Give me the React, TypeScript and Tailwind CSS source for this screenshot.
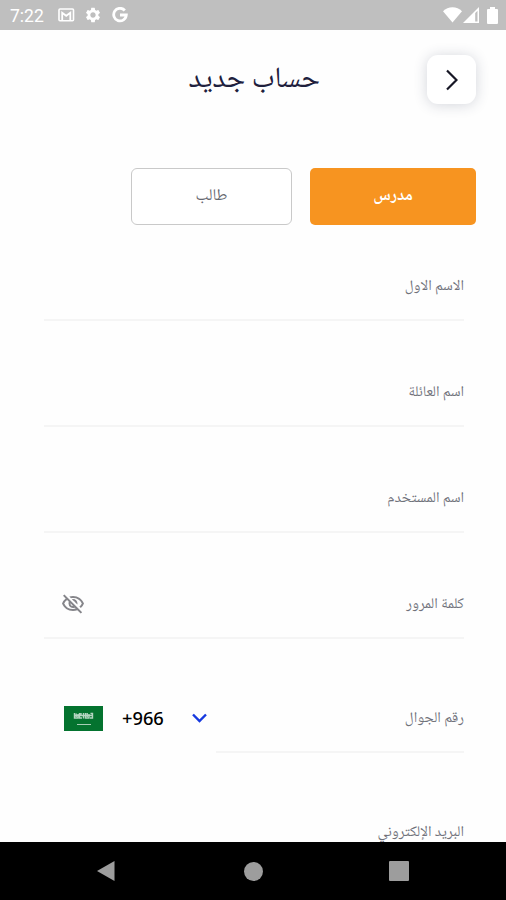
import { MdOutlineVisibilityOff, MdSettings } from "react-icons/md";

type Field = {
  label: string;
  secure?: boolean;
};

const fields: Field[] = [
  { label: "الاسم الاول" },
  { label: "اسم العائلة" },
  { label: "اسم المستخدم" },
  { label: "كلمة المرور", secure: true }
];

function StatusBar() {
  return (
    <div
      dir="ltr"
      className="flex h-[30px] shrink-0 items-center justify-between bg-[#bfbfbf] pr-2 pl-[10px] text-white"
    >
      <div className="flex items-center">
        <span className="w-[48px] pt-[2px] font-[Roboto] text-[17.5px] leading-[30px]">7:22</span>
        <svg className="h-[14px] w-[17px]" viewBox="0 0 17 14" fill="none">
          <rect x="1" y="1" width="14.5" height="11.8" rx="1" stroke="white" strokeWidth="1.6" />
          <path d="M4.2 12V4.8L8.2 7.8L12.3 4.8V12" stroke="white" strokeWidth="1.8" />
        </svg>
        <MdSettings className="ml-[9px] h-[18px] w-[18px]" />
        <svg className="ml-[10px] h-4 w-4" viewBox="0 0 16 16" fill="none">
          <path d="M12.8 3.5A6.3 6.3 0 1 0 14.3 8H8" stroke="white" strokeWidth="2.8" />
        </svg>
      </div>
      <div className="flex items-center">
        <svg className="h-4 w-[19px]" viewBox="0 0 19 16" fill="white">
          <path d="M0 4.2C5-1.2 14-1.2 19 4.2L9.5 15.5Z" />
        </svg>
        <svg className="ml-[1px] h-4 w-4" viewBox="0 0 16 16" fill="white">
          <path fillRule="evenodd" d="M0 16L16 0V16ZM11 7.2V14.6H14.5V3.8Z" />
          <path d="M11 6H12.2V15H11Z" />
        </svg>
        <svg className="ml-[8px] h-[17px] w-[11px]" viewBox="0 0 11 17" fill="white">
          <path d="M3 0H8V2H10Q11 2 11 3V16Q11 17 10 17H1Q0 17 0 16V3Q0 2 1 2H3Z" />
        </svg>
      </div>
    </div>
  );
}

function Flag() {
  return (
    <svg className="h-[25px] w-[39px]" viewBox="0 0 39 25">
      <rect width="39" height="25" fill="#04732f" />
      <path
        d="M10.5 7V12H14V8M12.2 7.5V11M15.5 7V12H18M17 7V10M19.5 7V12.5M21.5 7V12H25V8M23.2 7V11M26.5 7.5H28.5V12H26M10 9.5H29"
        fill="none"
        stroke="white"
        strokeOpacity="0.7"
        strokeWidth="1.4"
      />
      <path d="M13 18.5H27" stroke="white" strokeOpacity="0.65" strokeWidth="1" />
    </svg>
  );
}

function NavigationBar() {
  return (
    <div dir="ltr" className="flex h-[58px] shrink-0 items-center bg-black pl-[96px]">
      <svg className="h-[22px] w-[19px]" viewBox="0 0 19 22">
        <path d="M1 11L18.5 1V21Z" fill="#9d9d9d" />
      </svg>
      <div className="ml-[129px] h-[19px] w-[19px] rounded-full bg-[#9d9d9d]" />
      <div className="ml-[126px] h-5 w-5 rounded-[1px] bg-[#9d9d9d]" />
    </div>
  );
}

export default function App() {
  return (
    <div
      dir="rtl"
      className="flex h-[900px] w-[506px] flex-col overflow-hidden bg-[#fefefe] font-['Noto_Naskh_Arabic_UI','Noto_Naskh_Arabic','Noto_Sans_Arabic','Noto_Sans','DejaVu_Sans',sans-serif]"
    >
      <StatusBar />
      <main className="flex min-h-0 flex-1 flex-col">
        <header className="flex h-[138px] shrink-0 items-start px-[30px] pt-[25px]">
          <button className="flex h-[49px] w-[49px] items-center justify-center rounded-[11px] bg-white text-[#171725] shadow-[0_1px_14px_rgba(40,50,80,0.2)]">
            <svg className="h-[22px] w-3" viewBox="0 0 12 22" fill="none">
              <path d="M1 1.5L10.5 11L1 20.5" stroke="currentColor" strokeWidth="2.2" />
            </svg>
          </button>
          <h1 className="mr-[107px] text-[29.4px] leading-[50px] whitespace-nowrap text-[#20203d]">
            حساب جديد
          </h1>
        </header>
        <div className="flex h-[57px] shrink-0 gap-[18px] pr-[30px] text-[16.5px]">
          <button className="w-[166px] rounded-[5px] bg-[#f79420] pb-[1px] font-bold text-white">مدرس</button>
          <button className="w-[161px] rounded-[6px] border border-[#c9c9c9] bg-white pb-[1px] text-[#666870]">
            طالب
          </button>
        </div>
        <form className="mr-[42px] ml-[44px] text-[14.9px] text-[#70727b]">
          {fields.map((field) => (
            <div
              key={field.label}
              className="flex h-[106px] items-end justify-between border-b-2 border-[#f5f5f5] pb-[20px] first:h-[96px]"
            >
              <label className="leading-[26px] whitespace-nowrap">{field.label}</label>
              {field.secure && <MdOutlineVisibilityOff className="mb-[1px] ml-[17px] h-6 w-6 text-[#85858a]" />}
            </div>
          ))}
          <div className="flex h-[114px] justify-between">
            <div className="flex w-[248px] items-end border-b-2 border-[#f5f5f5] pb-[20px]">
              <label className="leading-[26px] whitespace-nowrap">رقم الجوال</label>
            </div>
            <div dir="ltr" className="flex w-[172px] items-end pb-[22px] pl-[20px]">
              <Flag />
              <span className="mb-[1px] ml-[19px] w-[70px] font-['Noto_Sans'] text-[18.3px] leading-[25px] font-medium text-black">
                +966
              </span>
              <svg className="mb-2 h-[10px] w-[15px]" viewBox="0 0 15 10" fill="none">
                <path d="M1 1.5L7.5 8L14 1.5" stroke="#1639df" strokeWidth="2.4" />
              </svg>
            </div>
          </div>
          <label className="mt-[66px] block h-[23px] leading-[26px]">البريد الإلكتروني</label>
        </form>
      </main>
      <NavigationBar />
    </div>
  );
}
